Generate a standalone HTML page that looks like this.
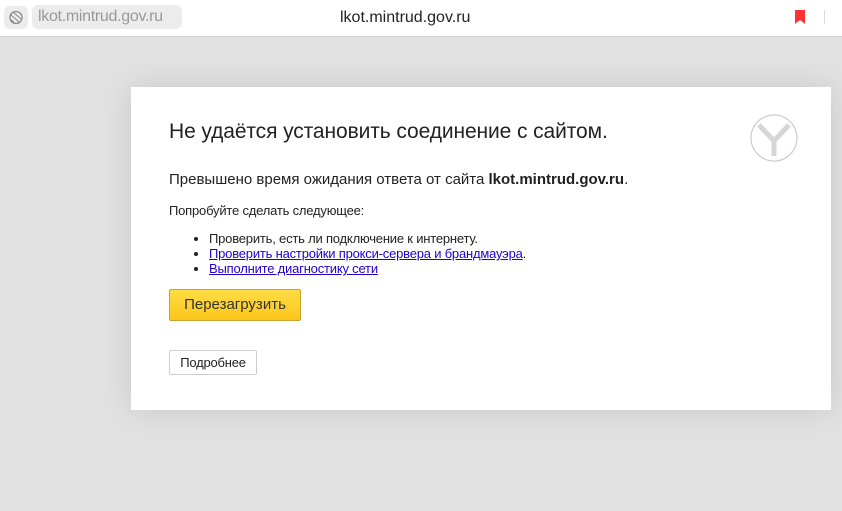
<!DOCTYPE html>
<html><head><meta charset="utf-8"><style>
*{margin:0;padding:0;box-sizing:border-box}
body{width:842px;height:511px;overflow:hidden;background:#e2e2e2;font-family:"Liberation Sans",Arial,sans-serif;position:relative}
.top{position:absolute;left:0;top:0;width:842px;height:37px;background:#fff;border-bottom:1px solid #d0d0d0}
.g{position:absolute;left:4px;top:6px;width:24px;height:23px;background:#ececec;border-radius:6px}
.u{position:absolute;left:32px;top:5px;width:150px;height:24px;background:#ececec;border-radius:6px;color:#999;font-size:16px;line-height:24px;padding-left:6px;letter-spacing:-0.3px}
.t{position:absolute;left:340px;top:9px;font-size:16px;color:#222}
.card{position:absolute;left:131px;top:87px;width:700px;height:323px;background:#fff;box-shadow:0 0 30px rgba(0,0,0,.12)}
h1{position:absolute;left:38px;top:33px;font-size:21px;font-weight:normal;color:#222;letter-spacing:-0.1px}
.p1{position:absolute;left:38px;top:84px;font-size:15px;color:#222}
.p2{position:absolute;left:38px;top:116px;font-size:13px;color:#222;letter-spacing:-0.2px}
ul{position:absolute;left:78px;top:144px;font-size:13px;line-height:15px;color:#222;letter-spacing:-0.2px}
a{color:#2200cc}
.b1{position:absolute;left:38px;top:202px;width:132px;height:32px;background:linear-gradient(#ffdd44,#fcc61a);border:1px solid #c9a433;border-radius:2px;font-size:15px;color:#333;text-align:center;line-height:30px}
.b2{position:absolute;left:38px;top:263px;width:88px;height:25px;border:1px solid #ccc;border-radius:2px;font-size:13px;color:#222;text-align:center;line-height:23px;letter-spacing:-0.2px}
</style></head><body>
<div class="top">
<div class="g"><svg width="24" height="23" viewBox="0 0 24 23"><circle cx="12" cy="11.5" r="6" fill="none" stroke="#888" stroke-width="1.3"/><path d="M7 9l8 7M9 6l8 7M6 13l4 3" stroke="#888" stroke-width="1" fill="none"/></svg></div>
<div class="u">lkot.mintrud.gov.ru</div>
<div class="t">lkot.mintrud.gov.ru</div>
<svg style="position:absolute;left:795px;top:10px" width="10" height="14"><path d="M0 0h10v14l-5-4-5 4z" fill="#f33"/></svg>
<div style="position:absolute;left:824px;top:10px;width:1px;height:14px;background:#ddd"></div>
</div>
<div class="card">
<h1>Не удаётся установить соединение с сайтом.</h1>
<svg style="position:absolute;left:619px;top:27px" width="48" height="48" viewBox="0 0 48 48"><circle cx="24" cy="24" r="23" fill="#fff" stroke="#ccc" stroke-width="1.2"/><path d="M9 11l15 16 15-16M24 27v15" stroke="#d6d6d6" stroke-width="5" fill="none"/></svg>
<div class="p1">Превышено время ожидания ответа от сайта <b>lkot.mintrud.gov.ru</b>.</div>
<div class="p2">Попробуйте сделать следующее:</div>
<ul>
<li>Проверить, есть ли подключение к интернету.</li>
<li><a href="#">Проверить настройки прокси-сервера и брандмауэра</a>.</li>
<li><a href="#">Выполните диагностику сети</a></li>
</ul>
<div class="b1">Перезагрузить</div>
<div class="b2">Подробнее</div>
</div>
</body></html>
